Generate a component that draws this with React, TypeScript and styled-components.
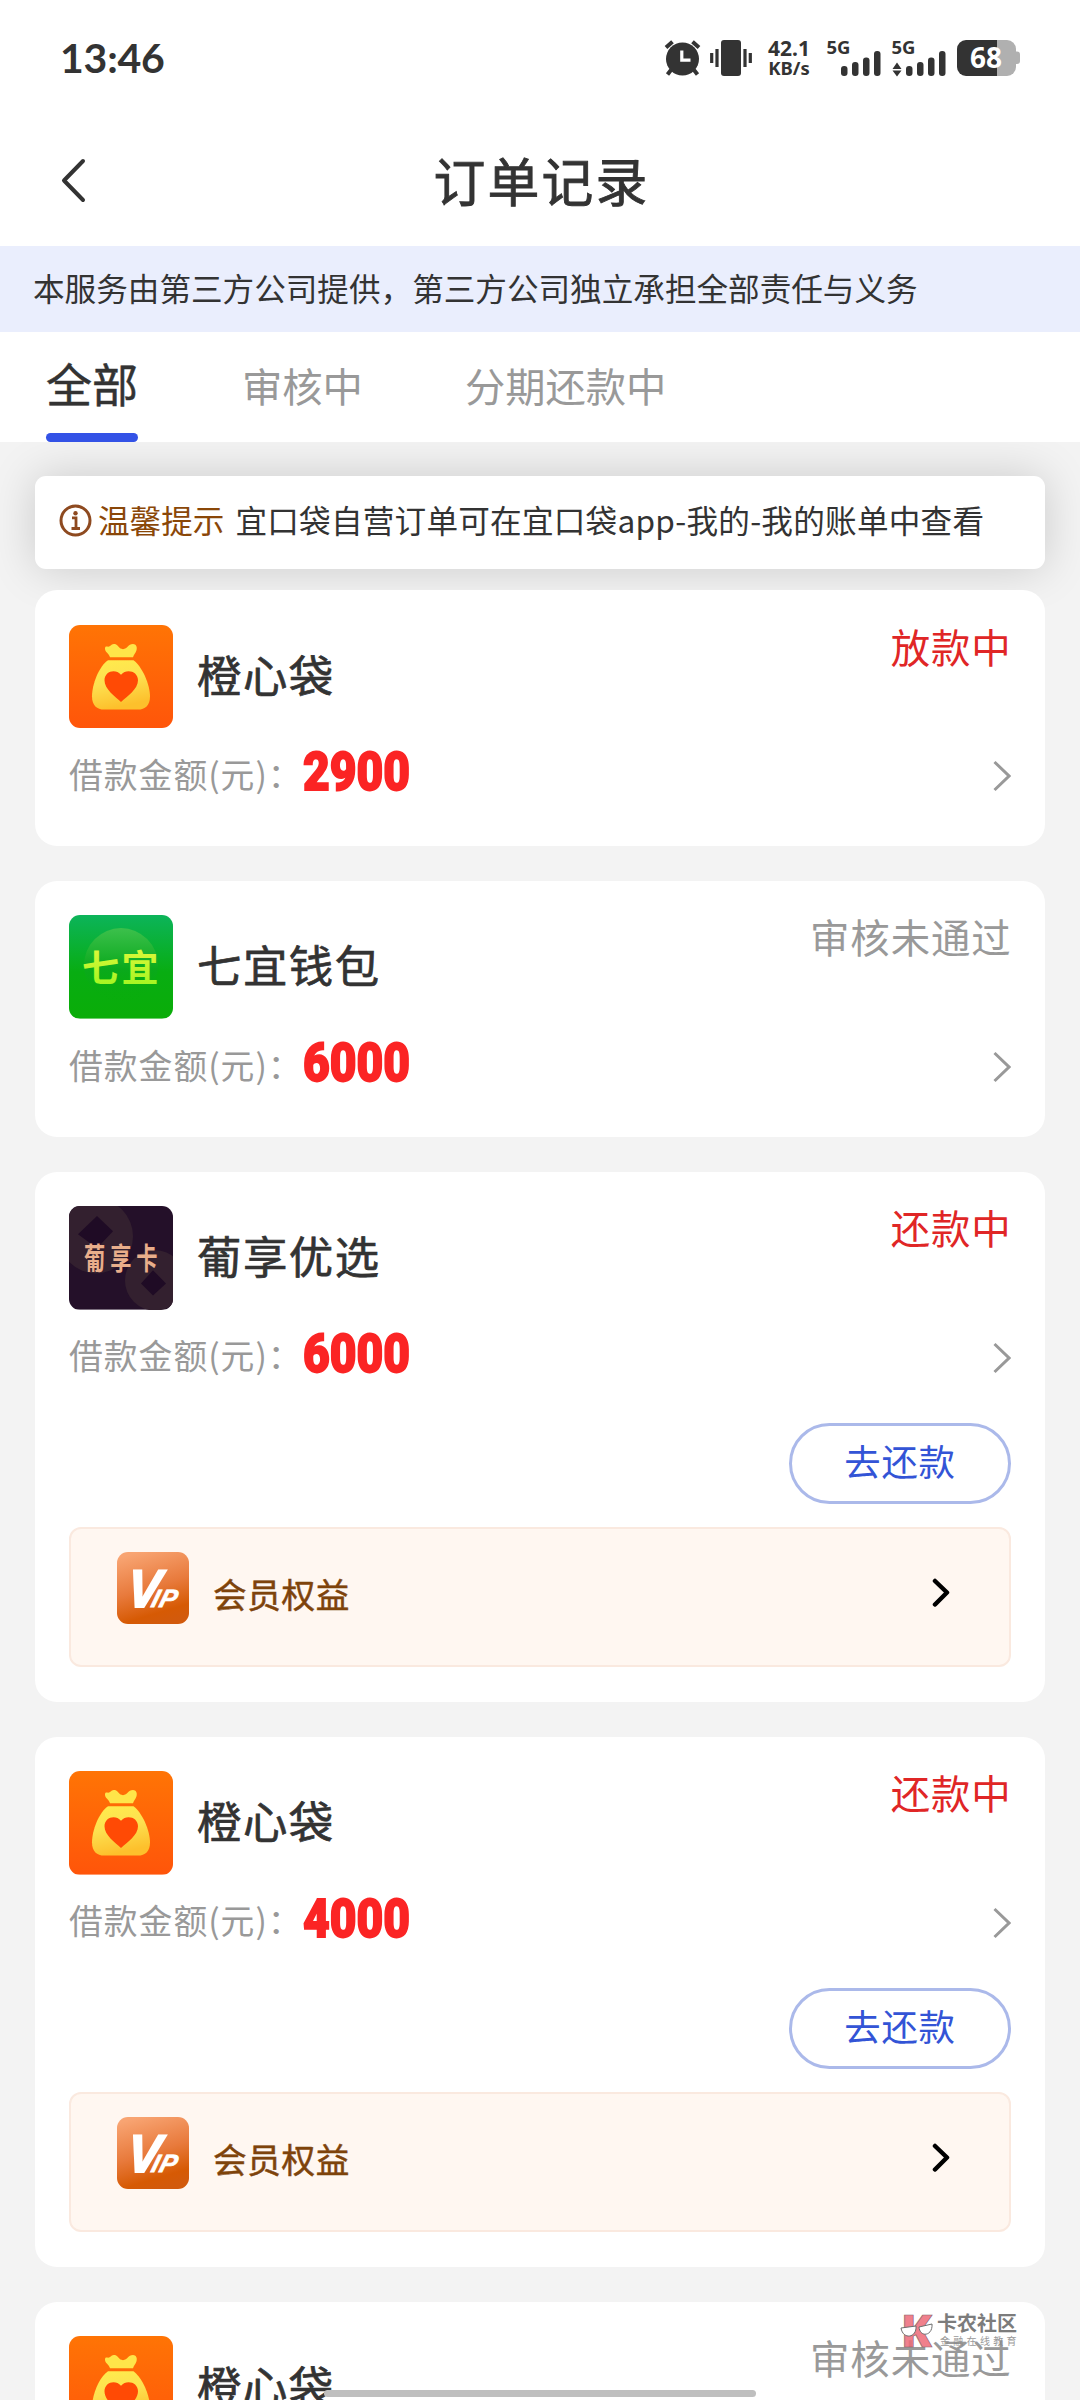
import React from "react";
import styled, { createGlobalStyle } from "styled-components";

const CJK = `"Noto Sans CJK SC", sans-serif`;

const GlobalStyle = createGlobalStyle`
  * { box-sizing: border-box; }
  body { margin: 0; background: #f3f3f3; font-family: ${CJK}; color: #333; }
`;

const Screen = styled.div`
  position: relative;
  width: 1080px;
  height: 2400px;
  overflow: hidden;
  background: #f3f3f3;
  display: flex;
  flex-direction: column;
`;

const StatusBar = styled.div`
  flex: none;
  height: 116px;
  padding: 0 60px 0 60px;
  background: #fff;
  display: flex;
  align-items: center;
  justify-content: space-between;
`;

const Clock = styled.div`
  font-family: Lato, sans-serif;
  font-weight: 700;
  font-size: 41px;
  line-height: 50px;
  letter-spacing: -0.2px;
`;

const StatusIcons = styled.div`
  display: flex;
  align-items: flex-start;
  height: 36px;
`;

const NetSpeed = styled.div`
  width: 44px;
  margin: -1px 16px 0 15px;
  font-family: "Noto Sans", sans-serif;
  font-weight: 700;
  text-align: center;
  display: flex;
  flex-direction: column;
  white-space: nowrap;
`;

const SpeedValue = styled.span<{ $size: number }>`
  font-size: ${(p) => p.$size}px;
  line-height: 19px;
`;

const StatusSvg = styled.svg<{ $ml?: number }>`
  display: block;
  flex: none;
  margin-left: ${(p) => p.$ml ?? 0}px;
  overflow: visible;
`;

const Header = styled.header`
  flex: none;
  height: 130px;
  padding: 0 60px;
  background: #fff;
  display: grid;
  grid-template-columns: 60px 1fr 60px;
  align-items: center;
`;

const Title = styled.h1`
  margin: -3px 0 0 3px;
  text-align: center;
  font-size: 51.8px;
  letter-spacing: 2.2px;
  font-weight: 400;
  line-height: 70px;
  -webkit-text-stroke: 0.9px #333;
`;

const Notice = styled.div`
  flex: none;
  height: 86px;
  padding: 0 33px;
  background: #eaeefd;
  font-size: 31.6px;
  line-height: 83px;
  white-space: nowrap;
`;

const Tabs = styled.nav`
  position: relative;
  z-index: 2;
  flex: none;
  height: 110px;
  padding-left: 46px;
  background: #fff;
  display: flex;
`;

const Tab = styled.div<{ $active?: boolean; $gap?: number }>`
  display: flex;
  flex-direction: column;
  justify-content: space-between;
  margin-left: ${(p) => p.$gap ?? 0}px;
  font-size: ${(p) => (p.$active ? 46 : 40.3)}px;
  font-weight: 400;
  color: ${(p) => (p.$active ? "#333" : "#999")};
  -webkit-text-stroke: ${(p) => (p.$active ? "0.5px #333" : "0")};
  line-height: ${(p) => (p.$active ? 101 : 105)}px;
  &::after {
    content: "";
    display: ${(p) => (p.$active ? "block" : "none")};
    height: 9px;
    border-radius: 5px;
    background: #3352e6;
  }
`;

const Tip = styled.div`
  flex: none;
  height: 93px;
  margin: 34px 35px 21px;
  padding: 0 24px 4px;
  border-radius: 11px;
  background: #fff;
  box-shadow: 0 0 46px rgba(0, 0, 0, 0.17);
  display: flex;
  align-items: center;
  font-size: 31.6px;
  line-height: 40px;
  white-space: nowrap;
`;

const TipLabel = styled.span`
  margin: -3px 11px 0 6px;
  color: #8a4708;
`;

const TipText = styled.span`
  margin-top: -3px;
  letter-spacing: 0.24px;
`;

const OrderList = styled.main`
  position: relative;
  z-index: 1;
  padding: 0 35px;
  display: flex;
  flex-direction: column;
  gap: 34.9px;
`;

const OrderCard = styled.section`
  flex: none;
  padding: 34.6px 34px 34.8px;
  border-radius: 22px;
  background: #fff;
  display: flex;
  flex-direction: column;
`;

const CardTop = styled.div`
  display: flex;
  height: 103.6px;
`;

const LogoSvg = styled.svg`
  display: block;
  width: 104px;
  height: 103.6px;
  border-radius: 11px;
`;

const ProductName = styled.div`
  flex: 1;
  margin-left: 24px;
  font-size: 44.4px;
  letter-spacing: 1.5px;
  font-weight: 400;
  line-height: 98px;
  -webkit-text-stroke: 0.7px #333;
`;

const StatusText = styled.div<{ $muted: boolean }>`
  margin-right: -0.5px;
  font-size: 39.4px;
  letter-spacing: 0.9px;
  line-height: 41px;
  color: ${(p) => (p.$muted ? "#999" : "#e02626")};
`;

const AmountRow = styled.div`
  display: flex;
  align-items: center;
  height: 83px;
`;

const AmountLabel = styled.div`
  width: 234px;
  font-size: 33.8px;
  letter-spacing: 1px;
  line-height: 50px;
  padding-top: 8px;
  color: #999;
  white-space: nowrap;
`;

const Amount = styled.div`
  flex: 1;
  font-family: Roboto, sans-serif;
  font-weight: 900;
  font-size: 54px;
  line-height: 60px;
  padding-top: 5px;
  color: #fb2424;
  transform: scaleX(0.855);
  transform-origin: 0 50%;
  -webkit-text-stroke: 1.8px #fb2424;
`;

const RowChevron = styled.svg`
  display: block;
  margin-top: 13px;
`;

const Actions = styled.div`
  display: flex;
  justify-content: flex-end;
  margin-top: 30px;
`;

const PayButton = styled.button`
  width: 222px;
  height: 81px;
  padding: 0 0 7px;
  border: 3px solid #abb9ea;
  border-radius: 41px;
  background: #fff;
  color: #3354d6;
  font-family: ${CJK};
  font-size: 36.4px;
  letter-spacing: 0.8px;
  line-height: 68px;
`;

const VipBox = styled.div`
  height: 140px;
  margin-top: 23px;
  padding: 23px 59px 0 46px;
  border: 2px solid #fae9df;
  border-radius: 12px;
  background: #fff7f1;
  display: flex;
`;

const VipLabel = styled.div`
  flex: 1;
  margin: 18px 0 0 24px;
  font-size: 33.6px;
  letter-spacing: 0.7px;
  font-weight: 400;
  line-height: 48px;
  color: #7e430b;
  -webkit-text-stroke: 0.5px #7e430b;
`;

const VipArrow = styled.svg`
  margin-top: 26px;
`;

const Watermark = styled.div`
  position: absolute;
  z-index: 4;
  left: 900px;
  top: 2311px;
  display: flex;
  gap: 4px;
  opacity: 0.85;
`;

const WatermarkText = styled.div`
  display: flex;
  flex-direction: column;
  white-space: nowrap;
  color: #666;
`;

const WatermarkName = styled.span`
  font-size: 20px;
  font-weight: 700;
  line-height: 24px;
`;

const WatermarkSub = styled.span`
  margin-left: 3px;
  font-size: 10px;
  line-height: 12px;
  letter-spacing: 3.3px;
  color: #888;
`;

const HomeIndicator = styled.div`
  position: absolute;
  z-index: 5;
  left: 324px;
  top: 2390px;
  width: 432px;
  height: 7px;
  border-radius: 4px;
  background: #bfbfbf;
`;

const Alarm = () => (
  <StatusSvg width="37" height="36" viewBox="0 0 37 36">
    <circle cx="18.5" cy="19" r="16.5" fill="#333" />
    <path d="M2 7.5 L8.5 1.8 M35 7.5 L28.5 1.8 M7 30 L3.5 34.5 M30 30 L33.5 34.5" stroke="#333" strokeWidth="4" fill="none" />
    <path d="M17.8 10.5 V20.2 H26.5" stroke="#fff" strokeWidth="3.2" fill="none" />
  </StatusSvg>
);

const Vibrate = () => (
  <StatusSvg $ml={9} width="42" height="36" viewBox="0 0 42 36">
    <rect x="11" y="0" width="20" height="36" rx="3" fill="#333" />
    <path d="M1.7 13 V23 M7 9 V27 M35 9 V27 M40.3 13 V23" stroke="#333" strokeWidth="3.2" fill="none" />
  </StatusSvg>
);

const Signal = ({ arrows, ml }: { arrows?: boolean; ml?: number }) => (
  <StatusSvg $ml={ml} width="54" height="36" viewBox="0 0 54 36">
    <text x="-0.5" y="14" fontFamily="Noto Sans, sans-serif" fontWeight="700" fontSize="18.5" fill="#333">5G</text>
    {arrows && <path d="M0.5 29 L5 22.5 L9.5 29 Z M0.5 30.5 L5 36.5 L9.5 30.5 Z" fill="#333" />}
    <rect x="14" y="26" width="6.5" height="10" rx="3" fill="#333" />
    <rect x="25" y="22" width="6.5" height="14" rx="3" fill="#333" />
    <rect x="36" y="17.5" width="6.5" height="18.5" rx="3" fill="#333" />
    <rect x="47" y="11" width="6.5" height="25" rx="3" fill="#333" />
  </StatusSvg>
);

const Battery = () => (
  <StatusSvg $ml={11} width="63" height="36" viewBox="0 0 63 36">
    <path d="M40 0 H50 a9 9 0 0 1 9 9 V27 a9 9 0 0 1 -9 9 H40 Z" fill="#b0b0b0" />
    <path d="M59 11.5 h1 a3 3 0 0 1 3 3 v6.5 a3 3 0 0 1 -3 3 h-1 Z" fill="#b0b0b0" />
    <path d="M9 0 H40 V36 H9 a9 9 0 0 1 -9 -9 V9 a9 9 0 0 1 9 -9 Z" fill="#333" />
    <text x="29" y="28" textAnchor="middle" fontFamily="Noto Sans, sans-serif" fontWeight="700" fontSize="28" fill="#fff">68</text>
  </StatusSvg>
);

const OrangeLogo = () => (
  <LogoSvg viewBox="0 0 104 103" preserveAspectRatio="none">
    <defs>
      <linearGradient id="orangeBg" x1="0" y1="0" x2="0" y2="1">
        <stop offset="0" stopColor="#ff7405" />
        <stop offset="1" stopColor="#ff550a" />
      </linearGradient>
      <linearGradient id="bagFill" x1="0" y1="0" x2="0.25" y2="1">
        <stop offset="0" stopColor="#ffec4c" />
        <stop offset="0.5" stopColor="#fde050" />
        <stop offset="1" stopColor="#fdc02c" />
      </linearGradient>
    </defs>
    <rect width="104" height="103" fill="url(#orangeBg)" />
    <path d="M41 32 C40 28 36 27 36 23.5 C36 20 39 22.500 41 21 C43 19 44 18.500 46 19 C49.5 20 50 24 54 24 C58.5 24 59 19 64 19 C67 19 68.500 22 67.500 25 C66.5 28 65 29 64 32 Z" fill="#ffe549" />
    <path d="M39 35 H64.5 C73 41 81 59 81 71 C81 80 76 84 69 84 H35 C28 84 23 80 23 71 C23 59 30 41 39 35 Z" fill="url(#bagFill)" />
    <path d="M52 76.5 C46 71 35.5 64 35.5 55 C35.5 46 46.5 43 52 49.5 C57.5 43 69 46 69 55 C69 64 58 71 52 76.5 Z" fill="#ff4a05" />
  </LogoSvg>
);

const GreenLogo = () => (
  <LogoSvg viewBox="0 0 104 103" preserveAspectRatio="none">
    <defs>
      <linearGradient id="greenBg" x1="0" y1="0" x2="0" y2="1">
        <stop offset="0" stopColor="#0cb45a" />
        <stop offset="0.55" stopColor="#08ad12" />
        <stop offset="1" stopColor="#0aad08" />
      </linearGradient>
      <linearGradient id="greenDisc" x1="0" y1="0" x2="0" y2="1">
        <stop offset="0" stopColor="#3cc04c" />
        <stop offset="0.55" stopColor="#0aa91c" />
        <stop offset="1" stopColor="#08ad08" stopOpacity="0" />
      </linearGradient>
      <linearGradient id="limeText" x1="0" y1="0" x2="0" y2="1">
        <stop offset="0" stopColor="#edf840" />
        <stop offset="1" stopColor="#96f51c" />
      </linearGradient>
    </defs>
    <rect width="104" height="103" fill="url(#greenBg)" />
    <circle cx="52" cy="50" r="37" fill="url(#greenDisc)" />
    <text x="13" y="67" fontFamily="Noto Sans CJK SC, sans-serif" fontWeight="700" fontSize="37" letterSpacing="2.5" fill="url(#limeText)">七宜</text>
  </LogoSvg>
);

const PurpleLogo = () => (
  <LogoSvg viewBox="0 0 104 103" preserveAspectRatio="none">
    <rect width="104" height="103" fill="#241029" />
    <circle cx="27" cy="30" r="37" fill="#33202f" />
    <path d="M28 10 L44 25 L28 42 L9 28 Z" fill="#1f0b25" />
    <circle cx="86" cy="74" r="30" fill="#33202f" />
    <path d="M84 64 L97 77 L84 89 L72 77 Z" fill="#1f0b25" />
    <g transform="translate(15 63) scale(0.85 1.18)">
      <text x="0" y="0" fontFamily="Noto Sans CJK SC, sans-serif" fontWeight="700" fontSize="25" letterSpacing="5.8" fill="#e9ae8b">葡享卡</text>
    </g>
  </LogoSvg>
);

const VipIcon = () => (
  <svg width="72" height="72" viewBox="0 0 72 72">
    <defs>
      <linearGradient id="vipBg" x1="0.3" y1="0" x2="0.6" y2="1">
        <stop offset="0" stopColor="#f8a472" />
        <stop offset="0.5" stopColor="#e87a3c" />
        <stop offset="0.85" stopColor="#d65a04" />
        <stop offset="1" stopColor="#d25a0c" />
      </linearGradient>
    </defs>
    <rect width="72" height="72" rx="11" fill="url(#vipBg)" />
    <g fontFamily="Liberation Sans, sans-serif" fontWeight="700" fontStyle="italic" fill="#fff" stroke="#fff">
      <text transform="translate(9 55) skewX(-6) scale(0.93 1)" fontSize="53" strokeWidth="2">V</text>
      <text transform="translate(33 55) skewX(-16)" fontSize="25" strokeWidth="0.8" letterSpacing="1">IP</text>
    </g>
  </svg>
);

const LOGOS = { orange: OrangeLogo, green: GreenLogo, purple: PurpleLogo };

interface Order {
  logo: keyof typeof LOGOS;
  name: string;
  amount: string;
  status: string;
  muted?: boolean;
  payable?: boolean;
}

const ORDERS: Order[] = [
  { logo: "orange", name: "橙心袋", amount: "2900", status: "放款中" },
  { logo: "green", name: "七宜钱包", amount: "6000", status: "审核未通过", muted: true },
  { logo: "purple", name: "葡享优选", amount: "6000", status: "还款中", payable: true },
  { logo: "orange", name: "橙心袋", amount: "4000", status: "还款中", payable: true },
];

const OrderHead = ({ logo, name, status, muted }: Pick<Order, "logo" | "name" | "status" | "muted">) => {
  const Logo = LOGOS[logo];
  return (
    <CardTop>
      <Logo />
      <ProductName>{name}</ProductName>
      <StatusText $muted={!!muted}>{status}</StatusText>
    </CardTop>
  );
};

const OrderItem = ({ order }: { order: Order }) => (
  <OrderCard>
    <OrderHead {...order} />
    <AmountRow>
      <AmountLabel>借款金额(元)：</AmountLabel>
      <Amount>{order.amount}</Amount>
      <RowChevron width="19" height="32" viewBox="0 0 19 32">
        <path d="M2.5 2 L17 16 L2.5 30" fill="none" stroke="#999" strokeWidth="3" />
      </RowChevron>
    </AmountRow>
    {order.payable && (
      <>
        <Actions>
          <PayButton>去还款</PayButton>
        </Actions>
        <VipBox>
          <VipIcon />
          <VipLabel>会员权益</VipLabel>
          <VipArrow width="18" height="30" viewBox="0 0 18 30">
            <path d="M3 3 L15 14.5 L3 26.5" fill="none" stroke="#000" strokeWidth="4.5" strokeLinecap="round" strokeLinejoin="round" />
          </VipArrow>
        </VipBox>
      </>
    )}
  </OrderCard>
);

export default function App() {
  return (
    <>
      <GlobalStyle />
      <Screen>
        <StatusBar>
          <Clock>13:46</Clock>
          <StatusIcons>
            <Alarm />
            <Vibrate />
            <NetSpeed>
              <SpeedValue $size={21}>42.1</SpeedValue>
              <SpeedValue $size={18.5}>KB/s</SpeedValue>
            </NetSpeed>
            <Signal />
            <Signal arrows ml={11} />
            <Battery />
          </StatusIcons>
        </StatusBar>
        <Header>
          <svg width="28" height="46" viewBox="0 0 28 46">
            <path d="M23 3 L4 22.5 L23 42" fill="none" stroke="#333" strokeWidth="4" strokeLinecap="round" strokeLinejoin="round" />
          </svg>
          <Title>订单记录</Title>
        </Header>
        <Notice>本服务由第三方公司提供，第三方公司独立承担全部责任与义务</Notice>
        <Tabs>
          <Tab $active>全部</Tab>
          <Tab $gap={104}>审核中</Tab>
          <Tab $gap={102}>分期还款中</Tab>
        </Tabs>
        <Tip>
          <svg width="33" height="33" viewBox="0 0 33 33">
            <circle cx="16.5" cy="16.5" r="14.5" fill="none" stroke="#8e4a20" strokeWidth="3" />
            <circle cx="16.5" cy="9.2" r="2.2" fill="#8e4a20" />
            <path d="M13 13.8 H17 V24 M12.5 24.5 H21" fill="none" stroke="#8e4a20" strokeWidth="2.8" />
          </svg>
          <TipLabel>温馨提示</TipLabel>
          <TipText>宜口袋自营订单可在宜口袋app-我的-我的账单中查看</TipText>
        </Tip>
        <OrderList>
          {ORDERS.map((order, i) => (
            <OrderItem key={i} order={order} />
          ))}
          <OrderCard>
            <OrderHead logo="orange" name="橙心袋" status="审核未通过" muted />
          </OrderCard>
        </OrderList>
        <Watermark>
          <svg width="33" height="38" viewBox="0 0 33 38">
            <text x="1" y="35.500" fontFamily="Noto Sans, sans-serif" fontWeight="900" fontSize="45" fill="#ee6a78" stroke="#7b4a50" strokeWidth="0.7">K</text>
            <path d="M1 17 L16 15 C17 27 3 29 1 17 Z M19 16 L32 13 C33 25 20 27 19 16 Z" fill="#fff" stroke="#555" strokeWidth="1" />
          </svg>
          <WatermarkText>
            <WatermarkName>卡农社区</WatermarkName>
            <WatermarkSub>金融在线教育</WatermarkSub>
          </WatermarkText>
        </Watermark>
        <HomeIndicator />
      </Screen>
    </>
  );
}
